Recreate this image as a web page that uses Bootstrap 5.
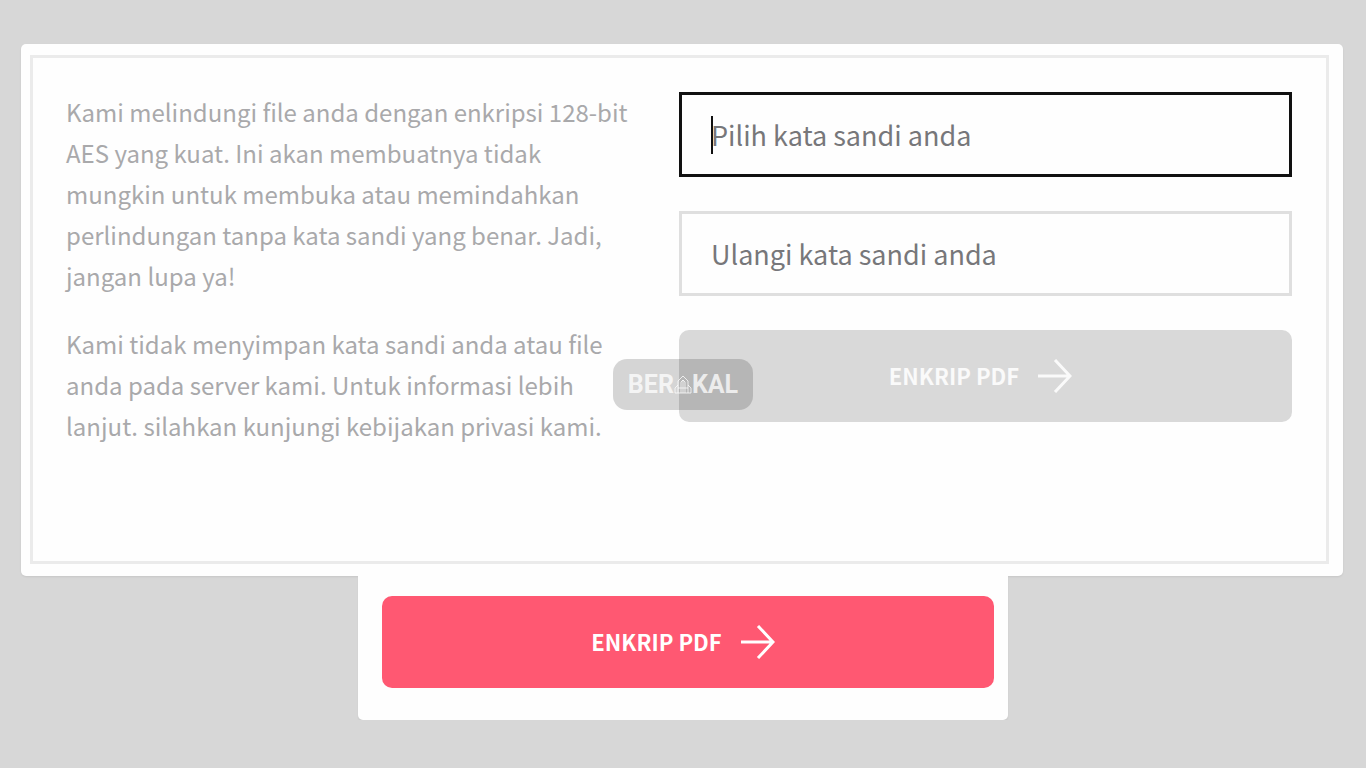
<!DOCTYPE html>
<html lang="id">
<head>
<meta charset="utf-8">
<meta name="viewport" content="width=device-width, initial-scale=1">
<title>Enkrip PDF</title>
<link href="https://cdn.jsdelivr.net/npm/bootstrap@5.3.0/dist/css/bootstrap.min.css" rel="stylesheet">
<style>
  body { background: #d7d7d7; font-family: "Noto Sans CJK SC", "Open Sans", sans-serif; }
  .page-area { padding: 44px 23px 0 21px; }
  .panel { background: #fefefe; border-radius: 5px; padding: 11px 14px 12px 9px; box-shadow: 0 1px 2px rgba(0,0,0,.08); }
  .panel-frame { border: 3px solid #ebebeb; padding: 33px 34px 115px 33px; }
  .info { color: #a9a9ab; font-size: 24px; line-height: 41px; padding-right: 36px; }
  .info p { margin-bottom: 27px; }
  .info p:last-child { margin-bottom: 0; }
  .fields { display: grid; gap: 34px; padding-top: 1px; }
  .pass-input { height: 85px; border: 3px solid #dfdfdf; border-radius: 0; padding: 0 29px; font-size: 27px; line-height: 40px; background: #fefefe; }
  .pass-input::placeholder { color: #77777a; opacity: 1; }
  .pass-input.current, .pass-input:focus { border-color: #111; box-shadow: none; }
  .text-cursor { position: absolute; left: 32px; top: 24px; width: 2px; height: 38px; background: #111; }
  .btn-encrypt { height: 92px; border: 0; border-radius: 10px; font-size: 22px; line-height: 32px; font-weight: 700; gap: 19px; padding: 0 10px 2px 0; }
  .btn-encrypt svg { margin-top: 2px; }
  .btn-encrypt, .btn-encrypt:hover, .btn-encrypt:disabled { color: #fff; background: #ff5872; opacity: 1; }
  .btn-encrypt.muted, .btn-encrypt.muted:disabled { color: #fafafa; background: #d9d9d9; }
  .watermark { position: absolute; top: 29px; left: -66px; width: 140px; height: 51px; border-radius: 14px; background: rgba(0,0,0,.16); color: rgba(255,255,255,.75); font: 700 25px/51px Roboto, sans-serif; z-index: 2; }
  .action-card { max-width: 650px; background: #fefefe; border-radius: 0 0 5px 5px; padding: 20px 14px 32px 24px; box-shadow: 0 2px 2px rgba(0,0,0,.06); }
</style>
</head>
<body>
<main class="page-area">
  <section class="panel">
    <div class="panel-frame">
      <div class="row g-0">
        <div class="col-6 info">
          <p>Kami melindungi file anda dengan enkripsi 128-bit AES yang kuat. Ini akan membuatnya tidak mungkin untuk membuka atau memindahkan perlindungan tanpa kata sandi yang benar. Jadi, jangan lupa ya!</p>
          <p>Kami tidak menyimpan kata sandi anda atau file anda pada server kami. Untuk informasi lebih lanjut. silahkan kunjungi kebijakan privasi kami.</p>
        </div>
        <form class="col-6 fields align-content-start">
          <div class="position-relative">
            <input class="form-control pass-input current" type="password" id="pass" aria-label="Pilih kata sandi anda" placeholder="Pilih kata sandi anda">
            <span class="text-cursor"></span>
          </div>
          <div>
            <input class="form-control pass-input" type="password" id="pass2" aria-label="Ulangi kata sandi anda" placeholder="Ulangi kata sandi anda">
          </div>
          <div class="position-relative">
            <button type="submit" class="btn btn-encrypt muted w-100 d-flex align-items-center justify-content-center" disabled>
              <span>ENKRIP PDF</span>
              <svg width="34" height="34" viewBox="0 0 34 34" fill="none" stroke="currentColor" stroke-width="3" aria-hidden="true"><path d="M0 17H32M17 1L32 17L17 33"/></svg>
            </button>
            <div class="watermark d-flex align-items-center justify-content-center">
              <span>BER</span>
              <svg width="18" height="20" viewBox="0 0 18 20" fill="none" stroke="currentColor" stroke-width="1" aria-hidden="true"><path d="M1 18V13L4 10V6L9 1L14 6V10L17 13V18ZM4 18V10M14 18V10M7 18V7L9 5L11 7V18M4 13H14M9 5V18"/></svg>
              <span>KAL</span>
            </div>
          </div>
        </form>
      </div>
    </div>
  </section>
</main>
<div class="action-card mx-auto">
  <button type="button" class="btn btn-encrypt w-100 d-flex align-items-center justify-content-center">
    <span>ENKRIP PDF</span>
    <svg width="34" height="34" viewBox="0 0 34 34" fill="none" stroke="currentColor" stroke-width="3" aria-hidden="true"><path d="M0 17H32M17 1L32 17L17 33"/></svg>
  </button>
</div>
<script src="https://cdn.jsdelivr.net/npm/bootstrap@5.3.0/dist/js/bootstrap.bundle.min.js"></script>
</body>
</html>
